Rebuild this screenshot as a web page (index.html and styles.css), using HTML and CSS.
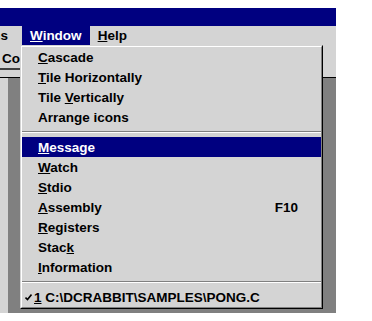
FILE: index.html
```html
<!DOCTYPE html>
<html lang="en">
<head>
    <meta charset="UTF-8">
    <title>Window menu</title>
    <link rel="stylesheet" href="styles.css">
</head>
<body>
    <div class="window">
        <div class="titlebar"></div>
        <div class="menubar">
            <span class="menu-item first">Options</span>
            <span class="menu-item active"><u>W</u>indow</span>
            <span class="menu-item"><u>H</u>elp</span>
        </div>
        <div class="workspace">
            <div class="toolbar">
                <div class="tool-label">Co</div>
            </div>
            <div class="client">
                <div class="client-edge"></div>
                <div class="client-area"></div>
            </div>
        </div>

        <div class="dropdown">
            <div class="dropdown-inner">
                <div class="entry"><u>C</u>ascade</div>
                <div class="entry"><u>T</u>ile Horizontally</div>
                <div class="entry">Tile <u>V</u>ertically</div>
                <div class="entry">Arrange icons</div>
                <div class="separator"></div>
                <div class="entry selected"><u>M</u>essage</div>
                <div class="entry"><u>W</u>atch</div>
                <div class="entry"><u>S</u>tdio</div>
                <div class="entry"><u>A</u>ssembly <span class="shortcut">F10</span></div>
                <div class="entry"><u>R</u>egisters</div>
                <div class="entry">Stac<u>k</u></div>
                <div class="entry"><u>I</u>nformation</div>
                <div class="separator"></div>
                <div class="entry checked"><svg class="check" width="7" height="7" viewBox="0 0 7 7"><path d="M0.5 3.5 L2.5 5.5 L6.5 0.5" fill="none" stroke="#000" stroke-width="1.6"/></svg><u>1</u> C:\DCRABBIT\SAMPLES\PONG.C</div>
            </div>
        </div>
    </div>
</body>
</html>
```

FILE: styles.css
```css
body {
    margin: 0;
    background: #fff;
    font-family: "Liberation Sans", Arial, sans-serif;
    font-size: 13.5px;
    font-weight: bold;
    color: #000;
}
.window {
    position: relative;
    width: 336px;
    height: 305px;
    margin-top: 8px;
    display: flex;
    flex-direction: column;
    background: #d4d4d4;
    overflow: hidden;
}
.titlebar {
    height: 18px;
    background: #000080;
}
.menubar {
    height: 20px;
    display: flex;
    align-items: stretch;
}
.menu-item {
    height: 19px;
    line-height: 19px;
    padding: 0 8px;
}
.menu-item.first {
    margin-left: -51px;
    margin-right: 6px;
}
.menu-item.active {
    background: #000080;
    color: #fff;
}
.workspace {
    flex: 1;
    display: flex;
    flex-direction: column;
}
.toolbar {
    height: 32px;
    border-bottom: 1px solid #000;
    box-sizing: border-box;
}
.tool-label {
    width: 20px;
    height: 24px;
    padding: 4px 0 0 2px;
    box-sizing: border-box;
    line-height: 18px;
    overflow: hidden;
    white-space: nowrap;
    border-bottom: 2px solid #404040;
}
.client {
    flex: 1;
    display: flex;
}
.client-edge {
    width: 8px;
    background: #d4d4d4;
}
.client-area {
    flex: 1;
    background: #808080;
}
.dropdown {
    position: absolute;
    left: 20px;
    top: 37px;
    width: 303px;
    border: 1px solid;
    border-color: #d4d4d4 #000 #000 #d4d4d4;
    box-sizing: border-box;
    background: #d4d4d4;
}
.dropdown-inner {
    border: 1px solid;
    border-color: #fff #808080 #808080 #fff;
}
.entry {
    position: relative;
    height: 20px;
    line-height: 20px;
    padding: 1px 0 0 16px;
    box-sizing: border-box;
    white-space: nowrap;
}
.entry.selected {
    background: #000080;
    color: #fff;
}
.shortcut {
    position: absolute;
    right: 23px;
    top: 1px;
}
.entry.checked {
    padding-left: 3px;
}
.check {
    margin-right: 2px;
    vertical-align: 1px;
}
.separator {
    height: 10px;
    box-sizing: border-box;
    padding-top: 4px;
}
.separator::before {
    content: "";
    display: block;
    height: 1px;
    background: #808080;
    border-bottom: 1px solid #fff;
}
```
